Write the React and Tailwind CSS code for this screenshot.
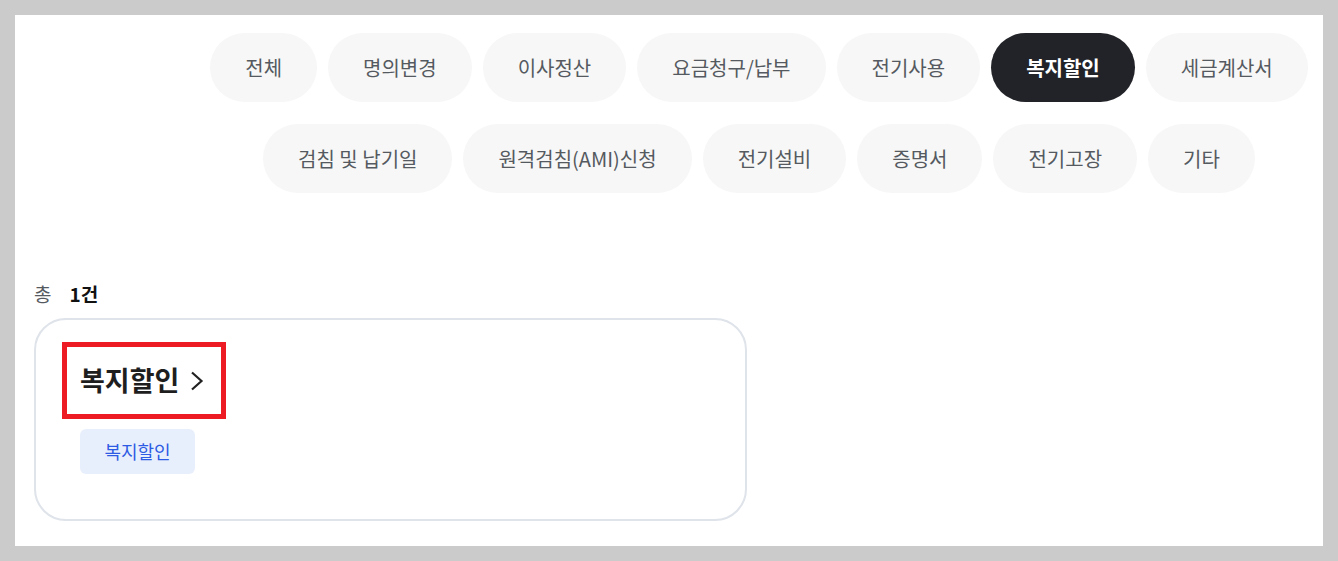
import React, { useState } from "react";

const rowOne = ["전체", "명의변경", "이사정산", "요금청구/납부", "전기사용", "복지할인", "세금계산서"];
const rowTwo = ["검침 및 납기일", "원격검침(AMI)신청", "전기설비", "증명서", "전기고장", "기타"];

const Pill = ({ label, active, onClick }) => (
  <button
    onClick={onClick}
    className={`h-[69px] px-[35px] rounded-full text-[20px] whitespace-nowrap ${
      active ? "bg-[#222328] text-white font-bold" : "bg-[#f7f7f7] text-[#555a60]"
    }`}
  >
    {label}
  </button>
);

const App = () => {
  const [selected, setSelected] = useState("복지할인");

  return (
    <div className="min-h-screen bg-[#cbcbcb] p-[15px] font-['Noto_Sans_CJK_KR','Noto_Sans',sans-serif]">
      <div className="bg-white h-[531px] pl-[19px] pr-[16px] pt-[18px]">
        {/* category filter */}
        <div className="ml-auto w-[1096px]">
          <div className="flex justify-center gap-[11px]">
            {rowOne.map((c) => (
              <Pill key={c} label={c} active={selected === c} onClick={() => setSelected(c)} />
            ))}
          </div>
          <div className="flex justify-center gap-[11px] mt-[22px]">
            {rowTwo.map((c) => (
              <Pill key={c} label={c} active={selected === c} onClick={() => setSelected(c)} />
            ))}
          </div>
        </div>

        {/* count */}
        <div className="mt-[88px] flex items-center h-[26px] text-[19px] leading-[26px]">
          <span className="text-[#555a60]">총</span>
          <span className="ml-[18px] font-bold text-[#111]">1건</span>
        </div>

        {/* result card */}
        <div className="mt-[11px] w-[713px] h-[203px] border-2 border-[#dfe3ea] rounded-[32px] pl-[44px] pt-[27px]">
          <div className="relative inline-flex items-center h-[67px] -ml-[13px] pl-[13px] pr-[17px]">
            <span className="text-[27px] font-bold text-[#1e1e1e]">{selected}</span>
            <svg width="14" height="20" viewBox="0 0 14 20" className="ml-[11px]" fill="none">
              <path d="M2 1.5 L11.5 10 L2 18.5" stroke="#222" strokeWidth="2.2" />
            </svg>
            <span className="absolute -inset-[5px] border-[5px] border-[#ed1c24] pointer-events-none" />
          </div>
          <div className="mt-[15px] w-[115px] h-[45px] rounded-[6px] bg-[#e8effc] flex items-center justify-center text-[18px] text-[#2d5be3]">
            {selected}
          </div>
        </div>
      </div>
    </div>
  );
};

export default App;
